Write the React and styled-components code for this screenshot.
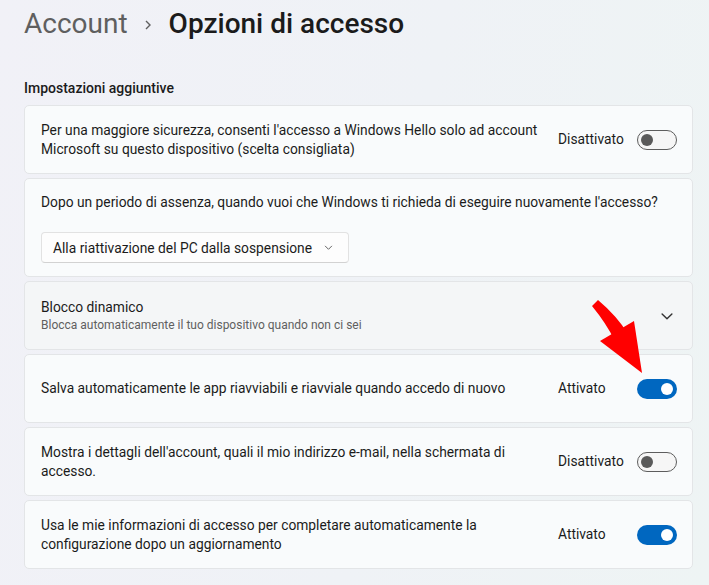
import React from 'react';
import styled, { createGlobalStyle } from 'styled-components';

const GlobalStyle = createGlobalStyle`
  html, body {
    margin: 0;
    padding: 0;
  }
  body {
    background: linear-gradient(100deg, #f1f1f7 0%, #eff2f6 55%, #eef4f4 100%);
    font-family: Roboto, "Liberation Sans", sans-serif;
    color: #1b1b1b;
  }
`;

const Page = styled.div`
  position: relative;
  box-sizing: border-box;
  width: 709px;
  min-height: 585px;
  padding: 6px 16px 0 24px;
`;

const Breadcrumb = styled.div`
  display: flex;
  align-items: center;
  height: 36px;
  font-size: 28px;
  line-height: 36px;
`;

const Crumb = styled.span`
  color: ${p => (p.$current ? '#1b1b1b' : '#5f5f5f')};
  font-weight: ${p => (p.$current ? 500 : 400)};
`;

const Sep = styled.svg`
  width: 8px;
  height: 12px;
  margin: 2px 17px 0 16px;
`;

const SectionTitle = styled.div`
  margin-top: 36px;
  margin-bottom: 7px;
  font-size: 14px;
  line-height: 20px;
  font-weight: 500;
`;

const List = styled.div`
  display: flex;
  flex-direction: column;
  gap: 4px;
`;

const Card = styled.div`
  box-sizing: border-box;
  min-height: 69px;
  border: 1px solid #e3e5e7;
  border-radius: 5px;
  background: ${p => (p.$tinted ? '#f4f6f7' : '#f9fbfc')};
  padding: ${p => p.$pad || '0 15px 0 16px'};
  display: flex;
  flex-direction: ${p => (p.$stack ? 'column' : 'row')};
  align-items: ${p => (p.$stack ? 'flex-start' : 'center')};
  justify-content: space-between;
`;

const Text = styled.div`
  flex: ${p => (p.$fill ? 1 : 'none')};
  margin-right: ${p => (p.$fill ? '8px' : 0)};
  font-size: 13.8px;
  line-height: 19px;
`;

const TextBlock = styled.div`
  display: flex;
  flex-direction: column;
`;

const Sub = styled.div`
  font-size: 12px;
  line-height: 16px;
  color: #5f5f5f;
`;

const ToggleGroup = styled.div`
  display: flex;
  align-items: center;
  gap: 12px;
  flex-shrink: 0;
`;

const ToggleLabel = styled.span`
  width: 67px;
  font-size: 13.8px;
  line-height: 19px;
`;

const Switch = styled.div`
  box-sizing: border-box;
  width: 40px;
  height: 20px;
  border-radius: 10px;
  display: flex;
  align-items: center;
  justify-content: ${p => (p.$on ? 'flex-end' : 'flex-start')};
  padding: 0 ${p => (p.$on ? '4px' : '3px')};
  background: ${p => (p.$on ? '#0067c0' : '#f6f6f6')};
  border: ${p => (p.$on ? 'none' : '1px solid #5d5d5d')};
`;

const Knob = styled.span`
  width: 12px;
  height: 12px;
  border-radius: 50%;
  background: ${p => (p.$on ? '#ffffff' : '#5a5a5a')};
`;

const Select = styled.div`
  box-sizing: border-box;
  margin-top: 20px;
  width: 308px;
  height: 31px;
  padding: 0 15px 0 11px;
  display: flex;
  align-items: center;
  justify-content: space-between;
  background: #fdfdfd;
  border: 1px solid #e2e2e2;
  border-bottom-color: #d2d2d2;
  border-radius: 4px;
  font-size: 13.8px;
`;

const Chevron = styled.svg`
  width: ${p => p.$size || 10}px;
  height: ${p => p.$size || 10}px;
  flex-shrink: 0;
`;

const ArrowOverlay = styled.svg`
  position: absolute;
  left: 0;
  top: 0;
  width: 709px;
  height: 585px;
  pointer-events: none;
`;

function Toggle({ on }) {
  return (
    <ToggleGroup>
      <ToggleLabel>{on ? 'Attivato' : 'Disattivato'}</ToggleLabel>
      <Switch $on={on}>
        <Knob $on={on} />
      </Switch>
    </ToggleGroup>
  );
}

function Down({ size, color }) {
  return (
    <Chevron $size={size} viewBox="0 0 10 10">
      <path d="M1.5 3.5 L5 7 L8.5 3.5" fill="none" stroke={color || '#444'} strokeWidth="1" strokeLinecap="round" strokeLinejoin="round" />
    </Chevron>
  );
}

export default function App() {
  return (
    <Page>
      <GlobalStyle />
      <Breadcrumb>
        <Crumb>Account</Crumb>
        <Sep viewBox="0 0 8 12">
          <path d="M2 2 L6 6 L2 10" fill="none" stroke="#5f5f5f" strokeWidth="1.4" />
        </Sep>
        <Crumb $current>Opzioni di accesso</Crumb>
      </Breadcrumb>

      <SectionTitle>Impostazioni aggiuntive</SectionTitle>

      <List>
        <Card>
          <Text $fill>
            Per una maggiore sicurezza, consenti l'accesso a Windows Hello solo ad account Microsoft su questo dispositivo (scelta consigliata)
          </Text>
          <Toggle on={false} />
        </Card>

        <Card $stack $pad="14px 16px 13px">
          <Text>Dopo un periodo di assenza, quando vuoi che Windows ti richieda di eseguire nuovamente l'accesso?</Text>
          <Select>
            <span>Alla riattivazione del PC dalla sospensione</span>
            <Down size={9} color="#555" />
          </Select>
        </Card>

        <Card $tinted $pad="0 18px 0 16px">
          <TextBlock>
            <Text>Blocco dinamico</Text>
            <Sub>Blocca automaticamente il tuo dispositivo quando non ci sei</Sub>
          </TextBlock>
          <Down size={14} color="#333" />
        </Card>

        <Card>
          <Text $fill>Salva automaticamente le app riavviabili e riavviale quando accedo di nuovo</Text>
          <Toggle on />
        </Card>

        <Card>
          <Text $fill>
            Mostra i dettagli dell'account, quali il mio indirizzo e-mail, nella schermata di accesso.
          </Text>
          <Toggle on={false} />
        </Card>

        <Card>
          <Text $fill>
            Usa le mie informazioni di accesso per completare automaticamente la configurazione dopo un aggiornamento
          </Text>
          <Toggle on />
        </Card>
      </List>

      <ArrowOverlay viewBox="0 0 709 585">
        <path d="M592 306 L598 300 Q617 316 628 334 L615 341 Q606 323 592 306 Z" fill="#ff0000" />
        <polygon points="600,341 634,321 642,373" fill="#ff0000" />
      </ArrowOverlay>
    </Page>
  );
}
